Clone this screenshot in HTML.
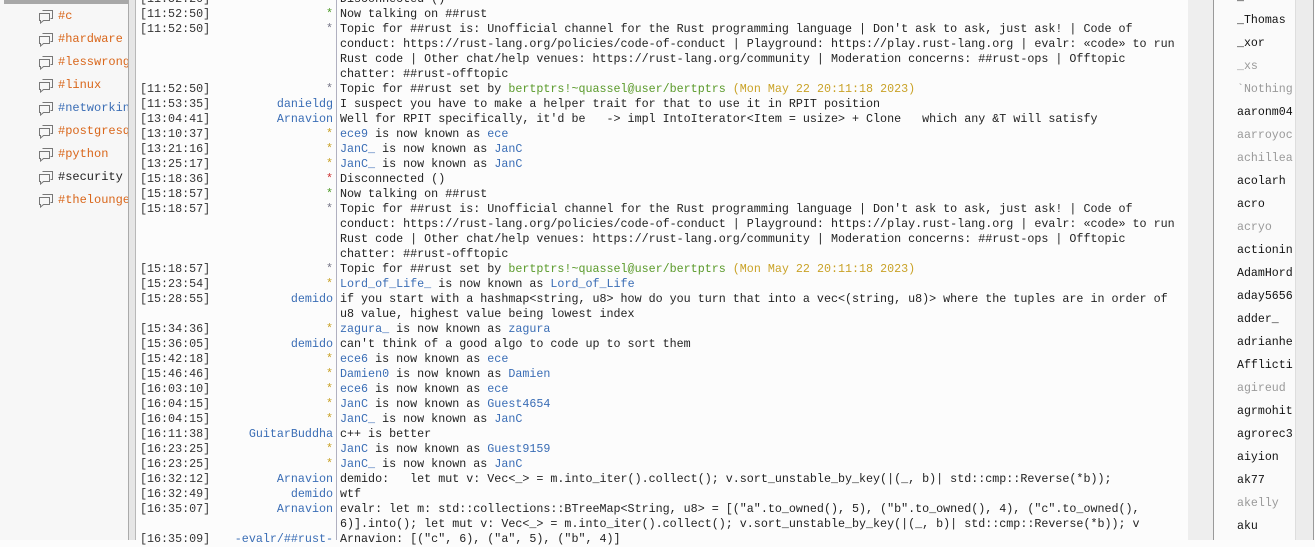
<!DOCTYPE html><html><head><meta charset="utf-8"><style>
body{margin:0;width:1315px;height:540px;overflow:hidden;background:#fcfcfc;font-family:"Liberation Mono",monospace;font-size:11.7px;position:relative}
#left{position:absolute;left:0;top:0;width:128px;height:540px;background:#f7f7f7;border-right:1px solid #aaa}
#left .top{position:absolute;left:4px;top:0;width:124px;height:4px;background:#a8a8a8}
.ch{position:absolute;left:38px;height:23px;line-height:23px;color:#d9661a;white-space:nowrap;width:90px;overflow:hidden}
.ch svg{position:absolute;left:0;top:4px}
.ch span{position:absolute;left:20px;font-size:12px}
#gut{position:absolute;left:129px;top:0;width:6px;height:540px;background:#e6e6e6;border-right:1px solid #b8b8b8}
#sep{position:absolute;left:336px;top:0;width:1px;height:540px;background:#b0b0c0}
.r{position:absolute;left:0;height:15px;line-height:15px;white-space:pre;color:#222;margin-top:2px}
.t{position:absolute;left:140px;color:#333}
.n{position:absolute;right:-333px;text-align:right;color:#3a6db5}
.m{position:absolute;left:340px}
.b{color:#3a6db5}.g{color:#4e9a28 !important}.y{color:#c9a227 !important}.gr{color:#5a9a2a}.rd{color:#c33 !important}.st{color:#778 !important}
#rg{position:absolute;left:1188px;top:0;width:25px;height:540px;background:#eeeeee;border-right:1px solid #999}
#nl{position:absolute;left:1214px;top:0;width:81px;height:540px;background:#fafafa}
#sb{position:absolute;left:1295px;top:0;width:17px;height:540px;background:#ececec;border-left:1px solid #ddd;border-right:1px solid #999}
.nk{position:absolute;left:1237px;height:23px;line-height:23px;color:#111;width:58px;overflow:hidden;white-space:pre;font-size:11.6px;margin-top:1px}
.nk.a{color:#999}
</style></head><body>
<div id="left"><div class="top"></div></div>
<div id="gut"></div>
<div id="sep"></div>
<div id="rg"></div><div id="nl"></div><div id="sb"></div>
<div class="ch" style="top:5px"><svg width="16" height="16" viewBox="0 0 16 16" fill="none" stroke="#777"><path d="M4.5 1.5h10v8h-2M1.5 4.5h10v7h-6l-3 2.5v-2.5h-1z"/></svg><span>#c</span></div>
<div class="ch" style="top:28px"><svg width="16" height="16" viewBox="0 0 16 16" fill="none" stroke="#777"><path d="M4.5 1.5h10v8h-2M1.5 4.5h10v7h-6l-3 2.5v-2.5h-1z"/></svg><span>#hardware</span></div>
<div class="ch" style="top:51px"><svg width="16" height="16" viewBox="0 0 16 16" fill="none" stroke="#777"><path d="M4.5 1.5h10v8h-2M1.5 4.5h10v7h-6l-3 2.5v-2.5h-1z"/></svg><span>#lesswrong</span></div>
<div class="ch" style="top:74px"><svg width="16" height="16" viewBox="0 0 16 16" fill="none" stroke="#777"><path d="M4.5 1.5h10v8h-2M1.5 4.5h10v7h-6l-3 2.5v-2.5h-1z"/></svg><span>#linux</span></div>
<div class="ch" style="top:97px;color:#3a6db5"><svg width="16" height="16" viewBox="0 0 16 16" fill="none" stroke="#777"><path d="M4.5 1.5h10v8h-2M1.5 4.5h10v7h-6l-3 2.5v-2.5h-1z"/></svg><span>#networkin</span></div>
<div class="ch" style="top:120px"><svg width="16" height="16" viewBox="0 0 16 16" fill="none" stroke="#777"><path d="M4.5 1.5h10v8h-2M1.5 4.5h10v7h-6l-3 2.5v-2.5h-1z"/></svg><span>#postgresq</span></div>
<div class="ch" style="top:143px"><svg width="16" height="16" viewBox="0 0 16 16" fill="none" stroke="#777"><path d="M4.5 1.5h10v8h-2M1.5 4.5h10v7h-6l-3 2.5v-2.5h-1z"/></svg><span>#python</span></div>
<div class="ch" style="top:166px;color:#222"><svg width="16" height="16" viewBox="0 0 16 16" fill="none" stroke="#777"><path d="M4.5 1.5h10v8h-2M1.5 4.5h10v7h-6l-3 2.5v-2.5h-1z"/></svg><span>#security</span></div>
<div class="ch" style="top:189px"><svg width="16" height="16" viewBox="0 0 16 16" fill="none" stroke="#777"><path d="M4.5 1.5h10v8h-2M1.5 4.5h10v7h-6l-3 2.5v-2.5h-1z"/></svg><span>#thelounge</span></div>

<div class="r" style="top:-10px"><span class="t">[11:52:20]</span><span class="n rd">*</span><span class="m">Disconnected ()</span></div>
<div class="r" style="top:5px"><span class="t">[11:52:50]</span><span class="n g">*</span><span class="m">Now talking on ##rust</span></div>
<div class="r" style="top:20px"><span class="t">[11:52:50]</span><span class="n st">*</span><span class="m">Topic for ##rust is: Unofficial channel for the Rust programming language | Don't ask to ask, just ask! | Code of</span></div>
<div class="r" style="top:35px"><span class="m">conduct: https://rust-lang.org/policies/code-of-conduct | Playground: https://play.rust-lang.org | evalr: «code» to run</span></div>
<div class="r" style="top:50px"><span class="m">Rust code | Other chat/help venues: https://rust-lang.org/community | Moderation concerns: ##rust-ops | Offtopic</span></div>
<div class="r" style="top:65px"><span class="m">chatter: ##rust-offtopic</span></div>
<div class="r" style="top:80px"><span class="t">[11:52:50]</span><span class="n st">*</span><span class="m">Topic for ##rust set by <span class="gr">bertptrs!~quassel@user/bertptrs</span> <span class="y">(Mon May 22 20:11:18 2023)</span></span></div>
<div class="r" style="top:95px"><span class="t">[11:53:35]</span><span class="n">danieldg</span><span class="m">I suspect you have to make a helper trait for that to use it in RPIT position</span></div>
<div class="r" style="top:110px"><span class="t">[13:04:41]</span><span class="n">Arnavion</span><span class="m">Well for RPIT specifically, it'd be   -> impl IntoIterator&lt;Item = usize&gt; + Clone   which any &amp;T will satisfy</span></div>
<div class="r" style="top:125px"><span class="t">[13:10:37]</span><span class="n y">*</span><span class="m"><span class="b">ece9</span> is now known as <span class="b">ece</span></span></div>
<div class="r" style="top:140px"><span class="t">[13:21:16]</span><span class="n y">*</span><span class="m"><span class="b">JanC_</span> is now known as <span class="b">JanC</span></span></div>
<div class="r" style="top:155px"><span class="t">[13:25:17]</span><span class="n y">*</span><span class="m"><span class="b">JanC_</span> is now known as <span class="b">JanC</span></span></div>
<div class="r" style="top:170px"><span class="t">[15:18:36]</span><span class="n rd">*</span><span class="m">Disconnected ()</span></div>
<div class="r" style="top:185px"><span class="t">[15:18:57]</span><span class="n g">*</span><span class="m">Now talking on ##rust</span></div>
<div class="r" style="top:200px"><span class="t">[15:18:57]</span><span class="n st">*</span><span class="m">Topic for ##rust is: Unofficial channel for the Rust programming language | Don't ask to ask, just ask! | Code of</span></div>
<div class="r" style="top:215px"><span class="m">conduct: https://rust-lang.org/policies/code-of-conduct | Playground: https://play.rust-lang.org | evalr: «code» to run</span></div>
<div class="r" style="top:230px"><span class="m">Rust code | Other chat/help venues: https://rust-lang.org/community | Moderation concerns: ##rust-ops | Offtopic</span></div>
<div class="r" style="top:245px"><span class="m">chatter: ##rust-offtopic</span></div>
<div class="r" style="top:260px"><span class="t">[15:18:57]</span><span class="n st">*</span><span class="m">Topic for ##rust set by <span class="gr">bertptrs!~quassel@user/bertptrs</span> <span class="y">(Mon May 22 20:11:18 2023)</span></span></div>
<div class="r" style="top:275px"><span class="t">[15:23:54]</span><span class="n y">*</span><span class="m"><span class="b">Lord_of_Life_</span> is now known as <span class="b">Lord_of_Life</span></span></div>
<div class="r" style="top:290px"><span class="t">[15:28:55]</span><span class="n">demido</span><span class="m">if you start with a hashmap&lt;string, u8&gt; how do you turn that into a vec&lt;(string, u8)&gt; where the tuples are in order of</span></div>
<div class="r" style="top:305px"><span class="m">u8 value, highest value being lowest index</span></div>
<div class="r" style="top:320px"><span class="t">[15:34:36]</span><span class="n y">*</span><span class="m"><span class="b">zagura_</span> is now known as <span class="b">zagura</span></span></div>
<div class="r" style="top:335px"><span class="t">[15:36:05]</span><span class="n">demido</span><span class="m">can't think of a good algo to code up to sort them</span></div>
<div class="r" style="top:350px"><span class="t">[15:42:18]</span><span class="n y">*</span><span class="m"><span class="b">ece6</span> is now known as <span class="b">ece</span></span></div>
<div class="r" style="top:365px"><span class="t">[15:46:46]</span><span class="n y">*</span><span class="m"><span class="b">Damien0</span> is now known as <span class="b">Damien</span></span></div>
<div class="r" style="top:380px"><span class="t">[16:03:10]</span><span class="n y">*</span><span class="m"><span class="b">ece6</span> is now known as <span class="b">ece</span></span></div>
<div class="r" style="top:395px"><span class="t">[16:04:15]</span><span class="n y">*</span><span class="m"><span class="b">JanC</span> is now known as <span class="b">Guest4654</span></span></div>
<div class="r" style="top:410px"><span class="t">[16:04:15]</span><span class="n y">*</span><span class="m"><span class="b">JanC_</span> is now known as <span class="b">JanC</span></span></div>
<div class="r" style="top:425px"><span class="t">[16:11:38]</span><span class="n">GuitarBuddha</span><span class="m">c++ is better</span></div>
<div class="r" style="top:440px"><span class="t">[16:23:25]</span><span class="n y">*</span><span class="m"><span class="b">JanC</span> is now known as <span class="b">Guest9159</span></span></div>
<div class="r" style="top:455px"><span class="t">[16:23:25]</span><span class="n y">*</span><span class="m"><span class="b">JanC_</span> is now known as <span class="b">JanC</span></span></div>
<div class="r" style="top:470px"><span class="t">[16:32:12]</span><span class="n">Arnavion</span><span class="m">demido:   let mut v: Vec&lt;_&gt; = m.into_iter().collect(); v.sort_unstable_by_key(|(_, b)| std::cmp::Reverse(*b));</span></div>
<div class="r" style="top:485px"><span class="t">[16:32:49]</span><span class="n">demido</span><span class="m">wtf</span></div>
<div class="r" style="top:500px"><span class="t">[16:35:07]</span><span class="n">Arnavion</span><span class="m">evalr: let m: std::collections::BTreeMap&lt;String, u8&gt; = [("a".to_owned(), 5), ("b".to_owned(), 4), ("c".to_owned(),</span></div>
<div class="r" style="top:515px"><span class="m">6)].into(); let mut v: Vec&lt;_&gt; = m.into_iter().collect(); v.sort_unstable_by_key(|(_, b)| std::cmp::Reverse(*b)); v</span></div>
<div class="r" style="top:530px"><span class="t">[16:35:09]</span><span class="n">-evalr/##rust-</span><span class="m">Arnavion: [("c", 6), ("a", 5), ("b", 4)]</span></div>

<div class="nk" style="top:-15px">_</div>
<div class="nk" style="top:8px">_Thomas</div>
<div class="nk" style="top:31px">_xor</div>
<div class="nk a" style="top:54px">_xs</div>
<div class="nk a" style="top:77px">`Nothing</div>
<div class="nk" style="top:100px">aaronm04</div>
<div class="nk a" style="top:123px">aarroyoc</div>
<div class="nk a" style="top:146px">achillea</div>
<div class="nk" style="top:169px">acolarh</div>
<div class="nk" style="top:192px">acro</div>
<div class="nk a" style="top:215px">acryo</div>
<div class="nk" style="top:238px">actionin</div>
<div class="nk" style="top:261px">AdamHord</div>
<div class="nk" style="top:284px">aday5656</div>
<div class="nk" style="top:307px">adder_</div>
<div class="nk" style="top:330px">adrianhe</div>
<div class="nk" style="top:353px">Afflicti</div>
<div class="nk a" style="top:376px">agireud</div>
<div class="nk" style="top:399px">agrmohit</div>
<div class="nk" style="top:422px">agrorec3</div>
<div class="nk" style="top:445px">aiyion</div>
<div class="nk" style="top:468px">ak77</div>
<div class="nk a" style="top:491px">akelly</div>
<div class="nk" style="top:514px">aku</div>
</body></html>
